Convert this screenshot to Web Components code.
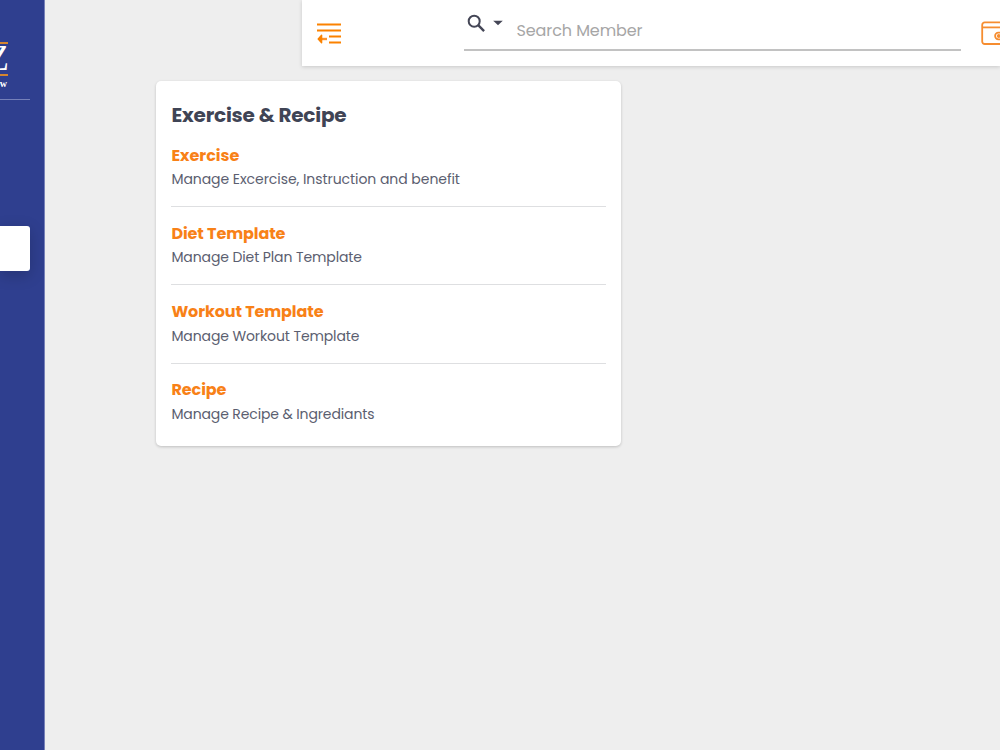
<!DOCTYPE html>
<html lang="en">
<head>
<meta charset="utf-8">
<title>Exercise &amp; Recipe</title>
<style>
	html, body {
		margin: 0;
		height: 100%;
	}

	body {
		overflow: hidden;
		background: #eee;
		font-family: Poppins, Inter, "Open Sans", sans-serif;
		color: #3f4455;
		--orange: #f88117;
		--navy: #2f3f8f;
	}
</style>
</head>
<body>
<app-shell>
	<side-bar slot="side"></side-bar>
	<top-bar slot="top"></top-bar>
	<link-card>
		<fit-label slot="heading" width="175">Exercise &amp; Recipe</fit-label>
		<link-item>
			<fit-label slot="name" width="68">Exercise</fit-label>
			<fit-label width="288.5">Manage Excercise, Instruction and benefit</fit-label>
		</link-item>
		<link-item>
			<fit-label slot="name" width="114">Diet Template</fit-label>
			<fit-label width="190.5">Manage Diet Plan Template</fit-label>
		</link-item>
		<link-item>
			<fit-label slot="name" width="152">Workout Template</fit-label>
			<fit-label width="188">Manage Workout Template</fit-label>
		</link-item>
		<link-item last>
			<fit-label slot="name" width="55">Recipe</fit-label>
			<fit-label width="203">Manage Recipe &amp; Ingrediants</fit-label>
		</link-item>
	</link-card>
</app-shell>

<script>
class AppShell extends HTMLElement {
	constructor() {
		super();
		this.attachShadow({ mode: 'open' });
		this.shadowRoot.innerHTML = `
			<style>
				:host {
					display: flex;
					height: 100vh;
				}

				main {
					flex: 1;
					min-width: 0;
				}
			</style>
			<slot name="side"></slot>
			<main>
				<slot name="top"></slot>
				<slot></slot>
			</main>
		`;
	}
}

class SideBar extends HTMLElement {
	constructor() {
		super();
		this.attachShadow({ mode: 'open' });
		this.shadowRoot.innerHTML = `
			<style>
				:host {
					display: block;
					flex: none;
					box-sizing: border-box;
					width: 45px;
					background: var(--navy);
					border-right: 1px solid #7781b8;
					overflow: hidden;
				}

				.brand {
					display: flex;
					flex-direction: column;
					box-sizing: border-box;
					width: 30px;
					height: 100px;
					padding-top: 42px;
					border-bottom: 1px solid #7580b9;
					color: #fff;
					font-family: "Liberation Serif", serif;
				}

				.letter {
					display: flex;
					justify-content: flex-end;
					box-sizing: border-box;
					width: 8px;
					height: 34px;
					border: solid #d5852f;
					border-width: 2px 0;
					font-size: 35px;
					line-height: 29px;
				}

				.letter span {
					margin-right: -1px;
				}

				.tagline {
					display: flex;
					justify-content: flex-end;
					width: 7px;
					font-size: 10px;
					font-weight: bold;
					line-height: 16px;
				}

				.active {
					width: 30px;
					height: 45px;
					margin-top: 126px;
					border-radius: 0 3px 3px 0;
					background: #fff;
					box-shadow: 0 4px 16px rgba(0, 0, 0, .2);
				}
			</style>
			<div class="brand">
				<div class="letter"><span>Z</span></div>
				<div class="tagline">w</div>
			</div>
			<div class="active"></div>
		`;
	}
}

class TopBar extends HTMLElement {
	constructor() {
		super();
		this.attachShadow({ mode: 'open' });
		this.shadowRoot.innerHTML = `
			<style>
				:host {
					display: flex;
					box-sizing: border-box;
					height: 66px;
					margin-left: 257.4px;
					padding-left: 14.6px;
					background: #fff;
					box-shadow: 0 1px 4px rgba(0, 0, 0, .16);
				}

				svg {
					display: block;
					flex: none;
				}

				.menu {
					margin-top: 22px;
				}

				.search {
					display: flex;
					box-sizing: border-box;
					width: 497px;
					height: 51px;
					margin-left: 122px;
					border-bottom: 2px solid #c2c2c2;
				}

				.glass {
					margin: 14px 0 0 3px;
				}

				.caret {
					margin: 20px 0 0 7px;
				}

				.placeholder {
					margin: 18.5px 0 0 13.5px;
					height: 24px;
					font-size: 16px;
					line-height: 24px;
					color: #a6a6a6;
				}

				.wallet {
					width: 19px;
					margin: 21px 0 0 20px;
					overflow: hidden;
				}
			</style>
			<svg class="menu" width="25" height="24" fill="none" stroke="#fb8200" stroke-width="2">
				<path d="M0 2.6h24M0 8.6h24M12 14.6h12M12 20.6h12"/>
				<path d="M4 17h6" stroke="#fd9530" stroke-width="2.4"/>
				<path d="M1.2 17l3.4-3.8v7.6z" fill="#fb8200" stroke-width="1.4" stroke-linejoin="round"/>
			</svg>
			<div class="search">
				<svg class="glass" width="19" height="19" fill="none" stroke="#444656" stroke-width="2">
					<circle cx="7.2" cy="7.2" r="5.5"/>
					<path d="M11.2 11.2l5.9 5.9" stroke-width="2.4"/>
				</svg>
				<svg class="caret" width="10" height="6"><path d="M.2 .8h9.6l-4.8 4.4z" fill="#444656"/></svg>
				<div class="placeholder"><fit-label width="126">Search Member</fit-label></div>
			</div>
			<div class="wallet">
				<svg width="30" height="25" fill="none" stroke="#f68d30" stroke-width="1.8">
					<rect x="1.2" y="1.4" width="26" height="21.6" rx="2.5"/>
					<path d="M1 6.4h26"/>
					<path d="M27 11.7h-9.6a3.2 3.2 0 0 0 0 6.6h9.6"/>
					<circle cx="17.8" cy="15" r="1"/>
				</svg>
			</div>
		`;
	}
}

class LinkCard extends HTMLElement {
	constructor() {
		super();
		this.attachShadow({ mode: 'open' });
		this.shadowRoot.innerHTML = `
			<style>
				:host {
					display: block;
					box-sizing: border-box;
					width: 465px;
					height: 364.5px;
					margin: 15.2px 0 0 111.4px;
					padding: 18px 15px 0;
					border-radius: 5px;
					background: #fff;
					box-shadow: 0 1px 3px rgba(0, 0, 0, .2);
				}

				h2 {
					margin: 0;
					height: 29.5px;
					font-size: 20px;
					font-weight: 700;
					line-height: 32px;
				}
			</style>
			<h2><slot name="heading"></slot></h2>
			<slot></slot>
		`;
	}
}

class LinkItem extends HTMLElement {
	constructor() {
		super();
		this.attachShadow({ mode: 'open' });
		this.shadowRoot.innerHTML = `
			<style>
				:host {
					display: flex;
					flex-direction: column;
					box-sizing: border-box;
					height: 78.3px;
					padding-top: 13.85px;
					border-bottom: 1px solid #dedfe1;
				}

				:host([last]) {
					border-bottom: none;
				}

				.name {
					height: 24.6px;
					color: var(--orange);
					font-size: 16px;
					font-weight: 700;
					line-height: 25px;
				}

				.about {
					color: #5b5e70;
					font-size: 14px;
					line-height: 24px;
				}
			</style>
			<div class="name"><slot name="name"></slot></div>
			<div class="about"><slot></slot></div>
		`;
	}
}

// One line of text, tracked in or out until it is as wide as the width attribute
class FitLabel extends HTMLElement {
	constructor() {
		super();
		this.attachShadow({ mode: 'open' });
		this.shadowRoot.innerHTML = `
			<style>
				:host {
					display: inline-block;
					white-space: nowrap;
				}
			</style>
			<slot></slot>
		`;
	}

	connectedCallback() {
		requestAnimationFrame(() => this.fit());
	}

	fit() {
		const width = parseFloat(this.getAttribute('width'));
		const count = this.textContent.length;
		const natural = this.getBoundingClientRect().width;
		this.style.letterSpacing = `${(width - natural) / count}px`;
	}
}

customElements.define('app-shell', AppShell);
customElements.define('side-bar', SideBar);
customElements.define('top-bar', TopBar);
customElements.define('link-card', LinkCard);
customElements.define('link-item', LinkItem);
customElements.define('fit-label', FitLabel);
</script>
</body>
</html>
